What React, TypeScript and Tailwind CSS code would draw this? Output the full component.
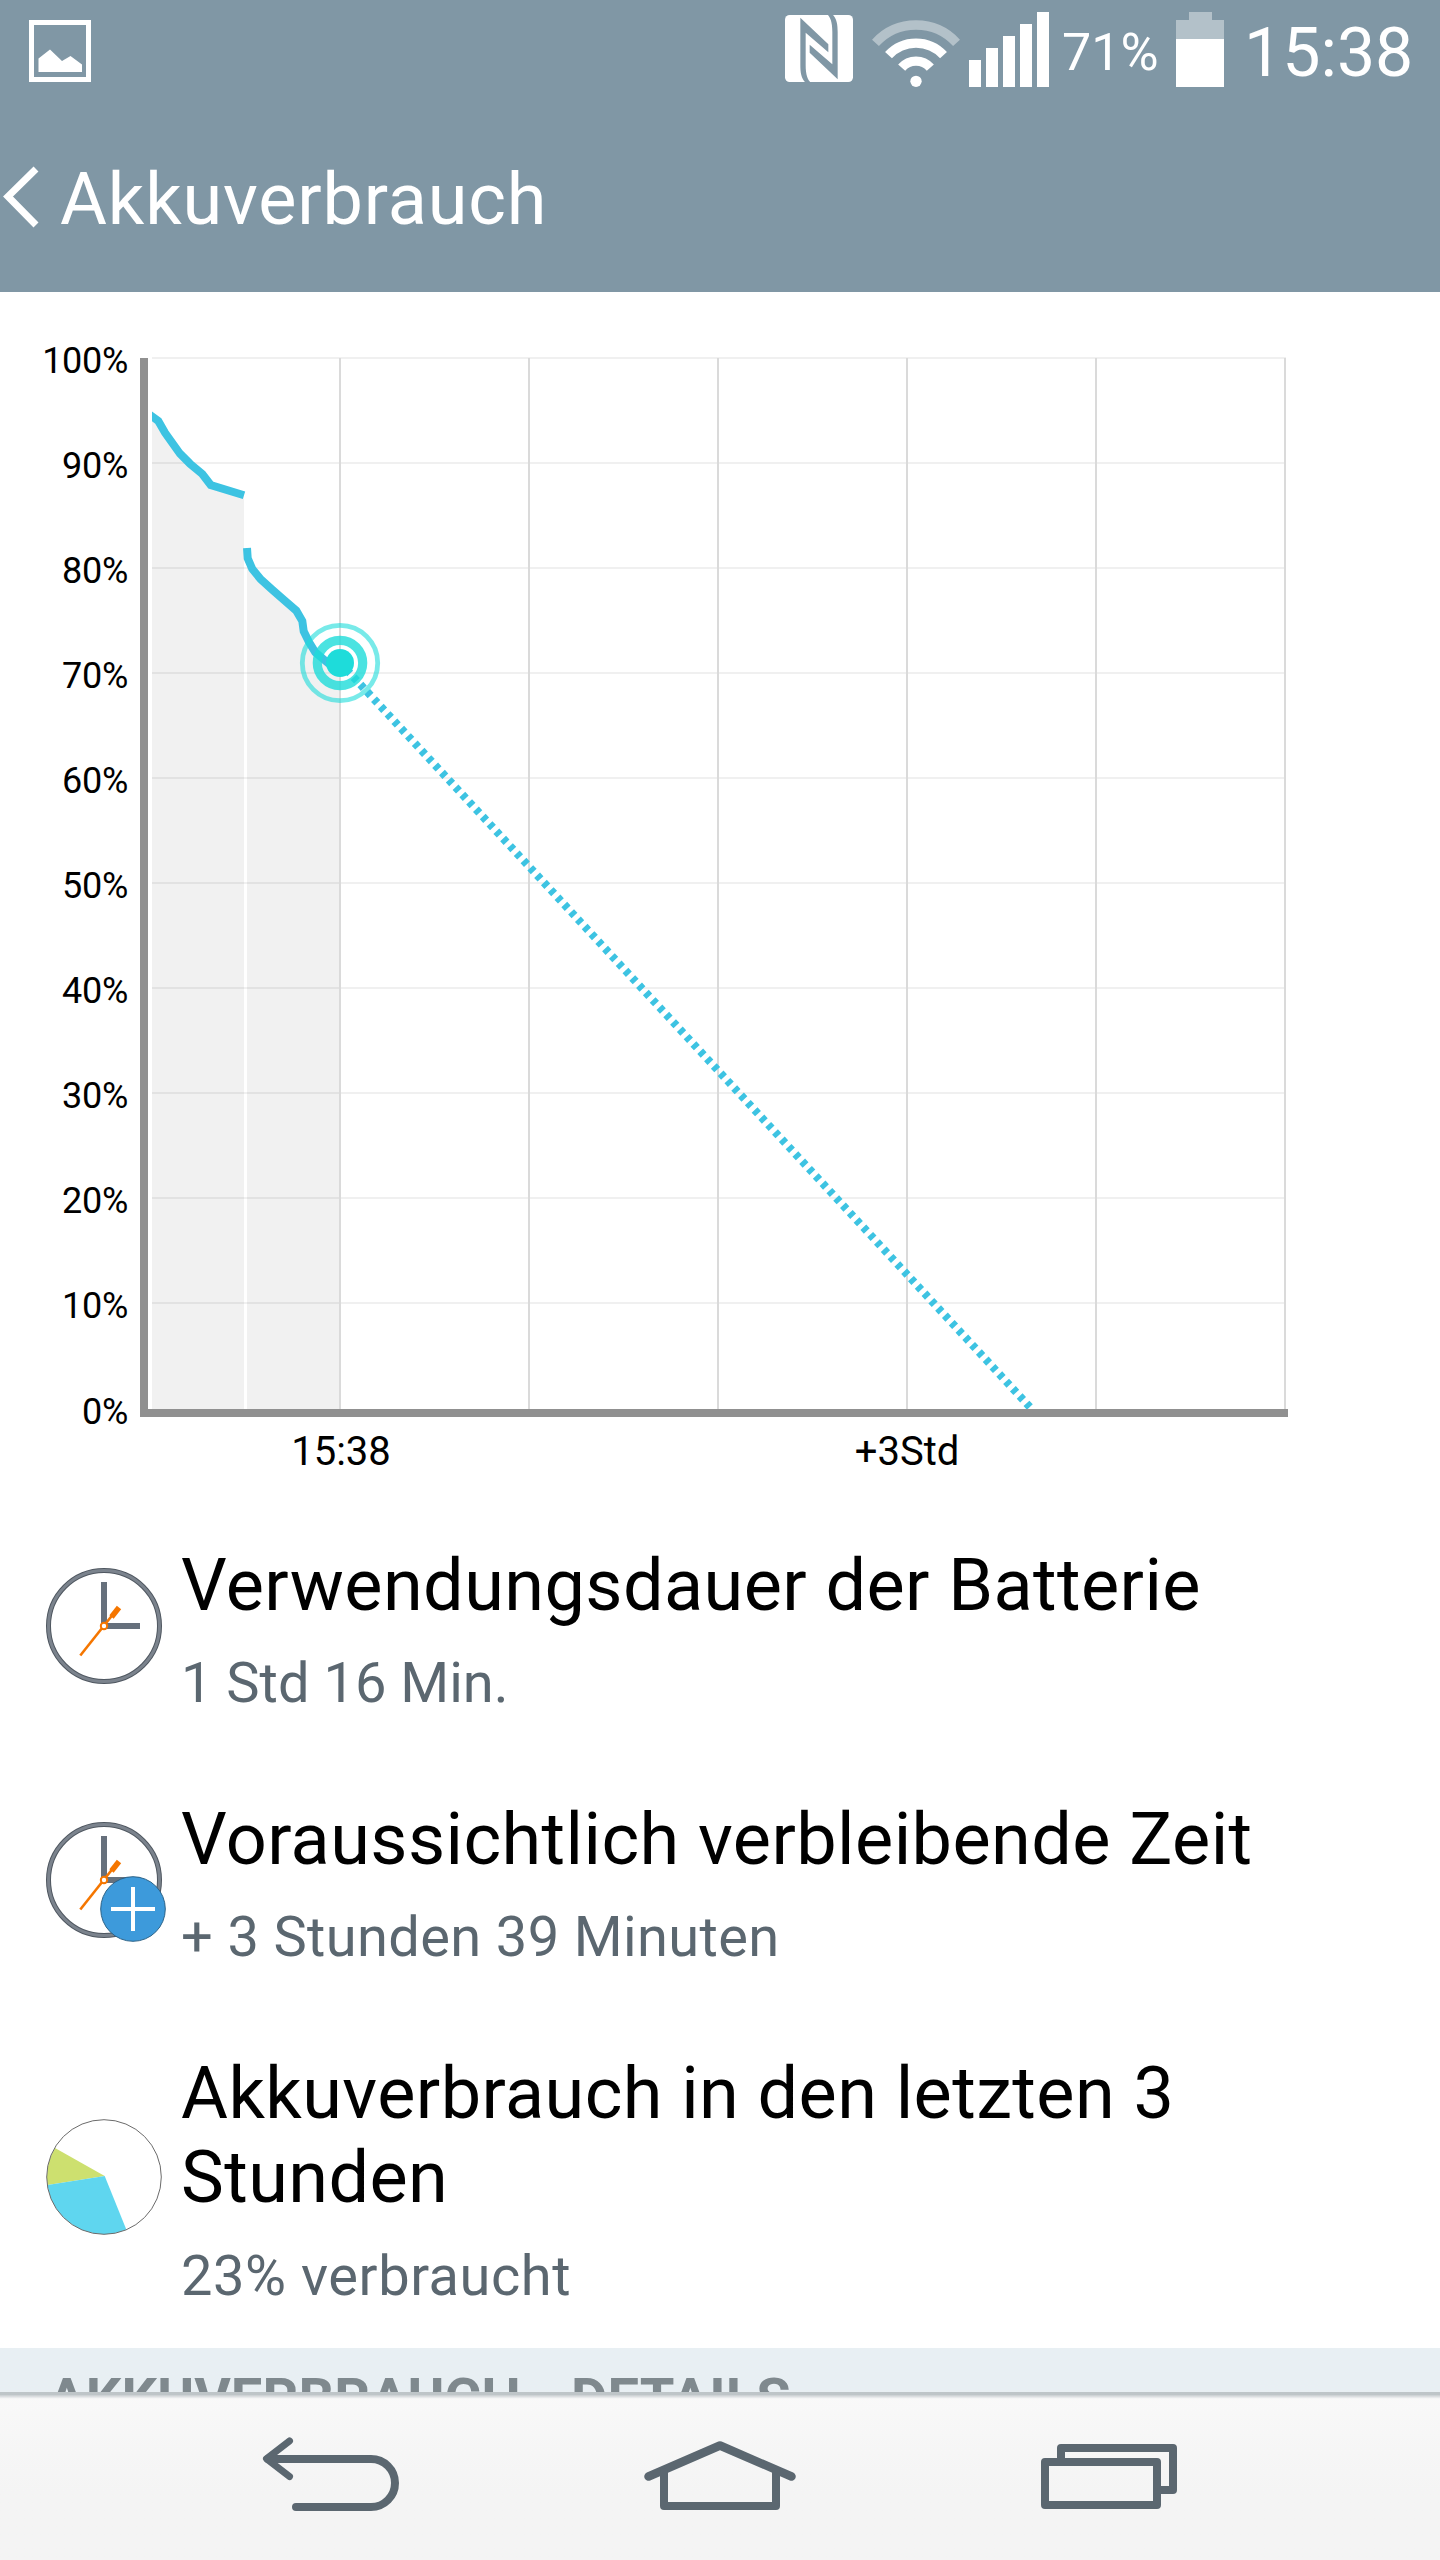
import React from "react";

const percentLabels = ["100%", "90%", "80%", "70%", "60%", "50%", "40%", "30%", "20%", "10%", "0%"];
const gridColumns = [340, 529, 718, 907, 1096, 1285];

function PictureIcon() {
  return (
    <svg className="mt-5 ml-[29px] block h-[62px] w-[62px] shrink-0" viewBox="0 0 62 62">
      <rect x="2.5" y="2.5" width="57" height="57" fill="none" stroke="#fff" strokeWidth="5" />
      <path d="M9.5 38.5 21 29.5 33 41 41.500 36 53 44.500V52H9.500Z" fill="#fff" />
    </svg>
  );
}

function NfcIcon() {
  return (
    <svg className="mt-3.5 block h-[69px] w-[70px] shrink-0" viewBox="27 27 210 207">
      <rect x="30" y="30" width="204" height="201" rx="14" fill="#fff" />
      <g fill="#8097a5">
        <path d="M92 233C78 220 76 200 76 180V38L160 118V142L92 83V180C92 210 98 225 108 233Z" />
        <path d="M172 28C186 41 188 61 188 81V223L104 143V119L172 178V81C172 51 166 36 156 28Z" />
      </g>
    </svg>
  );
}

function WifiIcon() {
  return (
    <svg className="mt-[19px] ml-[17px] block h-[69px] w-[90px] shrink-0" viewBox="288 42 270 207" fill="none" stroke="#fff" strokeWidth="28">
      <path d="M301.400 113.500A165 165 0 0 1 544.600 113.500" stroke="#b3c1c9" />
      <path d="M340.500 150.500A112 112 0 0 1 505.500 150.500" />
      <path d="M380 188A57 57 0 0 1 466 188" />
      <circle cx="423" cy="229" r="17" fill="#fff" stroke="none" />
    </svg>
  );
}

function SignalIcon() {
  return (
    <div className="mt-3 ml-2 flex h-[75px] w-20 shrink-0 items-end gap-[5px]">
      <div className="h-[27px] w-3 bg-white" />
      <div className="h-[39px] w-3 bg-white" />
      <div className="h-[51px] w-3 bg-white" />
      <div className="h-[63px] w-3 bg-white" />
      <div className="h-[75px] w-3 bg-white" />
    </div>
  );
}

function BatteryIcon() {
  return (
    <div className="mt-3 flex w-12 shrink-0 flex-col items-center">
      <div className="h-2 w-[23px] bg-[#b3c1c9]" />
      <div className="h-[19px] w-12 bg-[#b3c1c9]" />
      <div className="h-12 w-12 bg-white" />
    </div>
  );
}

function Header() {
  return (
    <header className="flex h-[292px] shrink-0 flex-col bg-[#8097a5] text-white">
      <div className="flex h-[108px] items-start">
        <PictureIcon />
        <div className="ml-[693px] flex items-start">
          <NfcIcon />
          <WifiIcon />
          <SignalIcon />
          <span className="mt-[22px] ml-[13px] w-[114px] shrink-0 text-[52px] leading-[61px] whitespace-nowrap">71%</span>
          <BatteryIcon />
          <span className="mt-[13px] ml-5 text-[68px] leading-[80px] whitespace-nowrap">15:38</span>
        </div>
      </div>
      <div className="flex items-start pt-[50px]">
        <svg className="mt-[7px] block h-[64px] w-10 shrink-0" viewBox="0 0 40 64" fill="none" stroke="#fff" strokeWidth="7">
          <path d="M36 4 8 31.500 36 60" />
        </svg>
        <h1 className="ml-5 text-[72px] leading-[84px] tracking-[0.85px] whitespace-nowrap">Akkuverbrauch</h1>
      </div>
    </header>
  );
}

function BatteryChart() {
  return (
    <svg className="block h-[1211px] w-[1440px] shrink-0" viewBox="0 292 1440 1211" fill="none">
      <path d="M152 416.500 158.300 421 165 432.700 180 453.700 190 463.700 202.300 474 210.700 485 244 495.300V1409H152Z" fill="#f1f1f1" />
      <path d="M247 548 247.700 558.300 252.300 569 260.700 579.300 272.300 589.700 284.300 600.300 296.300 610.700 302.300 621 303.700 631.300 309 642 315.300 652.300 327.700 662.700H340V1409H247Z" fill="#f1f1f1" />
      {percentLabels.slice(0, 10).map((label, i) => (
        <rect key={label} x="152" y={357 + i * 105} width="1134" height="2" fill="#000" fillOpacity="0.06" />
      ))}
      {gridColumns.map((x) => (
        <rect key={x} x={x - 1} y="358" width="2" height="1051" fill="#dadada" />
      ))}
      <clipPath id="plot">
        <rect x="152" y="358" width="1134" height="1051" />
      </clipPath>
      <g stroke="#3dc3e2" strokeWidth="8" clipPath="url(#plot)">
        <path d="M148 413.500 158.300 421 165 432.700 180 453.700 190 463.700 202.300 474 210.700 485 244 495.300" />
        <path d="M247 548 247.700 558.300 252.300 569 260.700 579.300 272.300 589.700 284.300 600.300 296.300 610.700 302.300 621 303.700 631.300 309 642 315.300 652.300 327.700 662.700H340" />
        <path d="M340 662.500 1031.700 1409" strokeDasharray="5 5" />
      </g>
      <circle cx="340" cy="663" r="37.700" stroke="#1edcda" strokeOpacity="0.6" strokeWidth="4.800" />
      <circle cx="340" cy="663" r="22.700" stroke="#1edcda" strokeOpacity="0.8" strokeWidth="9.200" />
      <circle cx="340" cy="663" r="14" fill="#1edcda" />
      <path d="M140 358H148V1409H1288V1417H140Z" fill="#909090" />
      <g fill="#000" fontSize="36" textAnchor="end" letterSpacing="-0.3">
        {percentLabels.map((label, i) => (
          <text key={label} x="128" y={label === "0%" ? 1424 : 373 + i * 105}>{label}</text>
        ))}
      </g>
      <g fill="#000" fontSize="40" textAnchor="middle">
        <text x="341" y="1465">15:38</text>
        <text x="907" y="1465">+3Std</text>
      </g>
    </svg>
  );
}

function ClockIcon({ badge = false }: { badge?: boolean }) {
  return (
    <svg className="block h-[128px] w-[128px]" viewBox="-58 -58 128 128" fill="none">
      <circle r="55.500" stroke="#4f5760" strokeWidth="5" />
      <circle r="55.500" stroke="#7b838d" strokeWidth="3" />
      <path d="M0-44V0H36" stroke="#66707c" strokeWidth="6" />
      <path d="M-23.700 29.500 14-18" stroke="#f57600" strokeWidth="2.600" />
      <path d="M7.500-9 15-18.500" stroke="#f57600" strokeWidth="5.500" />
      <circle r="3.200" fill="#fff" stroke="#f57600" strokeWidth="2" />
      {badge && (
        <g>
          <circle cx="29" cy="29" r="32.300" fill="#3d9adb" stroke="#2a6288" strokeWidth="1" />
          <path d="M7 29H51M29 7V51" stroke="#fff" strokeWidth="4" />
        </g>
      )}
    </svg>
  );
}

function PieIcon() {
  return (
    <svg className="block h-[128px] w-[128px]" viewBox="-58 -58 128 128" fill="none">
      <path d="M.7-1-49-29A57 57 0 0 0-56.500 8Z" fill="#cde06f" />
      <path d="M.7-1-56.500 8A57 57 0 0 0 22.300 52.600Z" fill="#5fd6ef" />
      <circle r="57.300" stroke="#6b6b6b" strokeWidth="1" />
    </svg>
  );
}

interface InfoRowProps {
  icon: React.ReactNode;
  title: string;
  detail: string;
  iconClass: string;
  detailClass: string;
}

function InfoRow({ icon, title, detail, iconClass, detailClass }: InfoRowProps) {
  return (
    <li className="flex items-start pt-[40.5px] pb-10">
      <div className={`ml-[46px] w-[134px] shrink-0 ${iconClass}`}>{icon}</div>
      <div className="ml-px w-[1100px]">
        <h2 className="text-[72px] leading-[84.5px] tracking-[0.43px] text-black">{title}</h2>
        <p className={`mt-[23px] pb-px text-[56px] leading-[65px] text-[#5b6770] ${detailClass}`}>{detail}</p>
      </div>
    </li>
  );
}

function NavBar() {
  return (
    <nav className="flex h-[168px] shrink-0 flex-col bg-linear-to-b from-[#f9f9f9] to-[#f4f4f4] to-60%">
      <div className="h-[3px] bg-[#bec5c8]" />
      <div className="h-[4px] bg-linear-to-b from-[#c8cdd0] to-[#fbfbfb]" />
      <svg className="block h-[161px] w-[1440px]" viewBox="0 2399 1440 161" fill="none" stroke="#5b6770" strokeWidth="8" strokeLinecap="round">
        <path d="M289.500 2441 266.500 2458.700 289.500 2476.500" strokeWidth="7" strokeLinejoin="round" />
        <path d="M268 2459H371A24 24 0 0 1 371 2507H296" />
        <path d="M648.500 2476.500 720 2445.500 791.500 2476.500" strokeWidth="8.500" strokeLinejoin="round" />
        <path d="M664 2472V2506H776V2472" strokeLinejoin="round" />
        <path d="M1061 2459V2448H1173V2490H1160" strokeLinecap="butt" strokeLinejoin="round" />
        <rect x="1045" y="2462" width="112" height="43" strokeLinejoin="round" />
      </svg>
    </nav>
  );
}

export default function App() {
  return (
    <div className="flex h-[2560px] w-[1440px] flex-col overflow-hidden bg-white font-['Roboto',sans-serif]">
      <Header />
      <BatteryChart />
      <ul className="flex h-[845px] shrink-0 flex-col">
        <InfoRow icon={<ClockIcon />} iconClass="mt-[24.5px]" detailClass="tracking-normal" title="Verwendungsdauer der Batterie" detail="1 Std 16 Min." />
        <InfoRow icon={<ClockIcon badge />} iconClass="mt-[24.5px]" detailClass="tracking-[0.36px]" title="Voraussichtlich verbleibende Zeit" detail="+ 3 Stunden 39 Minuten" />
        <InfoRow icon={<PieIcon />} iconClass="mt-[67.5px]" detailClass="tracking-[0.55px]" title="Akkuverbrauch in den letzten 3 Stunden" detail="23% verbraucht" />
      </ul>
      <section className="h-11 shrink-0 overflow-hidden bg-[#e8eff3]">
        <h3 className="ml-12 pt-[18px] text-[56px] leading-[66px] font-bold tracking-[0.1px] whitespace-nowrap text-[#7f898e]">AKKUVERBRAUCH - DETAILS</h3>
      </section>
      <NavBar />
    </div>
  );
}
